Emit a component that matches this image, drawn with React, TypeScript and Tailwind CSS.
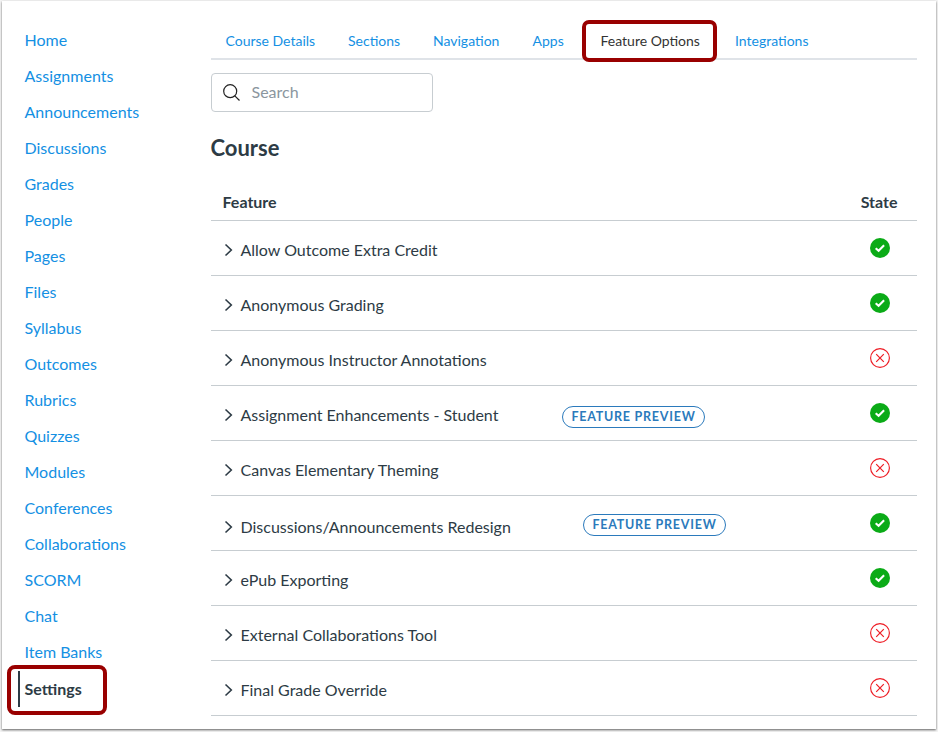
const navItems = [
  'Home', 'Assignments', 'Announcements', 'Discussions', 'Grades', 'People', 'Pages',
  'Files', 'Syllabus', 'Outcomes', 'Rubrics', 'Quizzes', 'Modules', 'Conferences',
  'Collaborations', 'SCORM', 'Chat', 'Item Banks', 'Settings',
];

const tabs = [
  { label: 'Course Details', width: 'w-[122.5px]' },
  { label: 'Sections', width: 'w-[85px]' },
  { label: 'Navigation', width: 'w-[99.5px]' },
  { label: 'Apps', width: 'w-[68px]' },
  { label: 'Feature Options', width: 'w-[134.5px]' },
  { label: 'Integrations', width: 'w-[100px]' },
];

type Feature = { name: string; on: boolean; preview?: string; shift?: string };

const features: Feature[] = [
  { name: 'Allow Outcome Extra Credit', on: true },
  { name: 'Anonymous Grading', on: true },
  { name: 'Anonymous Instructor Annotations', on: false },
  { name: 'Assignment Enhancements - Student', on: true, preview: 'w-[338.5px]' },
  { name: 'Canvas Elementary Theming', on: false },
  { name: 'Discussions/Announcements Redesign', on: true, preview: 'w-[359.5px]', shift: 'pt-1' },
  { name: 'ePub Exporting', on: true },
  { name: 'External Collaborations Tool', on: false },
  { name: 'Final Grade Override', on: false },
];

function StateIcon({ on }: { on: boolean }) {
  return on ? (
    <svg className="size-5" viewBox="0 0 20 20" fill="none">
      <circle cx="10" cy="10" r="10" fill="#0bab17" />
      <path d="M5.7 10.2 8.6 12.8 14.1 7.3" stroke="#fff" strokeWidth="2.1" />
    </svg>
  ) : (
    <svg className="size-5" viewBox="0 0 20 20" fill="none" stroke="#ee1c24">
      <circle cx="10" cy="10" r="9.4" strokeWidth="1.15" />
      <path d="M6.2 6.2 13.8 13.8M13.8 6.2 6.2 13.8" strokeWidth="1.2" />
    </svg>
  );
}

function FeatureRow({ feature }: { feature: Feature }) {
  return (
    <div className="flex h-[55px] items-center border-b border-[#c7cdd1] pl-[13px]">
      <div className={`flex items-center pt-[3px] ${feature.preview ?? 'w-[338.5px]'}`}>
        <div className={`flex items-center whitespace-nowrap ${feature.shift ?? ''}`}>
          <svg className="mr-[7px] h-[14px] w-[10px]" viewBox="0 0 10 14" fill="none" stroke="#2d3b45" strokeWidth="1.6">
            <path d="M1.5 1.5 7.3 7 1.5 12.5" />
          </svg>
          {feature.name}
        </div>
      </div>
      {feature.preview && (
        <div className={`flex h-[22px] w-[143px] items-center justify-center rounded-full border border-[#2b7abc] text-[12.5px] font-bold tracking-[0.75px] whitespace-nowrap text-[#2b7abc] ${feature.shift ? 'mt-[4px]' : 'mt-[7px]'}`}>
          FEATURE PREVIEW
        </div>
      )}
      <div className="mr-[27px] ml-auto"><StateIcon on={feature.on} /></div>
    </div>
  );
}

export default function App() {
  return (
    <div className="h-[732px] w-[938px] overflow-hidden bg-[#f4f4f4] pt-px pl-[2px] font-[Lato,sans-serif] text-[16px] leading-6 text-[#2d3b45]">
      <div className="flex h-[728px] w-[934px] bg-white shadow-[0_1px_2px_0_rgba(0,0,0,0.6)]">
        <nav className="w-[208.5px] shrink-0 pt-[22px] pl-[16px]">
          {navItems.map((item) =>
            item === 'Settings' ? (
              <div key={item} className="relative flex h-9 items-center border-l-2 border-[#2d3b45] pl-[4.5px] font-bold">
                Settings
                <div className="absolute -top-[6px] -left-[13px] h-[50px] w-[100px] rounded-[8px] border-4 border-[#990000]" />
              </div>
            ) : (
              <div key={item} className="flex h-9 items-center pb-[2px] pl-[6.5px] text-[#1490e3]">{item}</div>
            ),
          )}
        </nav>
        <main className="w-[706.5px]">
          <div className="flex h-[59px] border-b-2 border-[#dfe3e8] pt-[28px] pl-[15px] text-[14px] leading-6 text-[#1490e3]">
            {tabs.map((tab) => (
              <div key={tab.label} className={`relative shrink-0 whitespace-nowrap ${tab.width} ${tab.label === 'Feature Options' ? 'text-[#333]' : ''}`}>
                {tab.label}
                {tab.label === 'Feature Options' && (
                  <div className="absolute -top-[9px] -left-[19px] h-[42px] w-[135px] rounded-[7px] border-4 border-[#990000]" />
                )}
              </div>
            ))}
          </div>
          <div className="mt-[13px] flex h-[39px] w-[222.5px] items-center rounded-[4px] border border-[#c7cdd1] pb-px pl-[11.5px] text-[#8b969e]">
            <svg className="mr-[11.5px] size-[17px]" viewBox="0 0 17 17" fill="none" stroke="#222" strokeWidth="1.2">
              <circle cx="7.2" cy="7.2" r="6.5" />
              <path d="m11.8 11.8 4.7 4.7" />
            </svg>
            Search
          </div>
          <h1 className="mt-[20px] text-[22px] leading-8 font-bold">Course</h1>
          <div className="flex h-[57px] items-end justify-between border-b border-[#c7cdd1] pr-[19.5px] pb-[6px] pl-3 font-bold">
            <span>Feature</span>
            <span>State</span>
          </div>
          {features.map((feature) => <FeatureRow key={feature.name} feature={feature} />)}
        </main>
      </div>
    </div>
  );
}
